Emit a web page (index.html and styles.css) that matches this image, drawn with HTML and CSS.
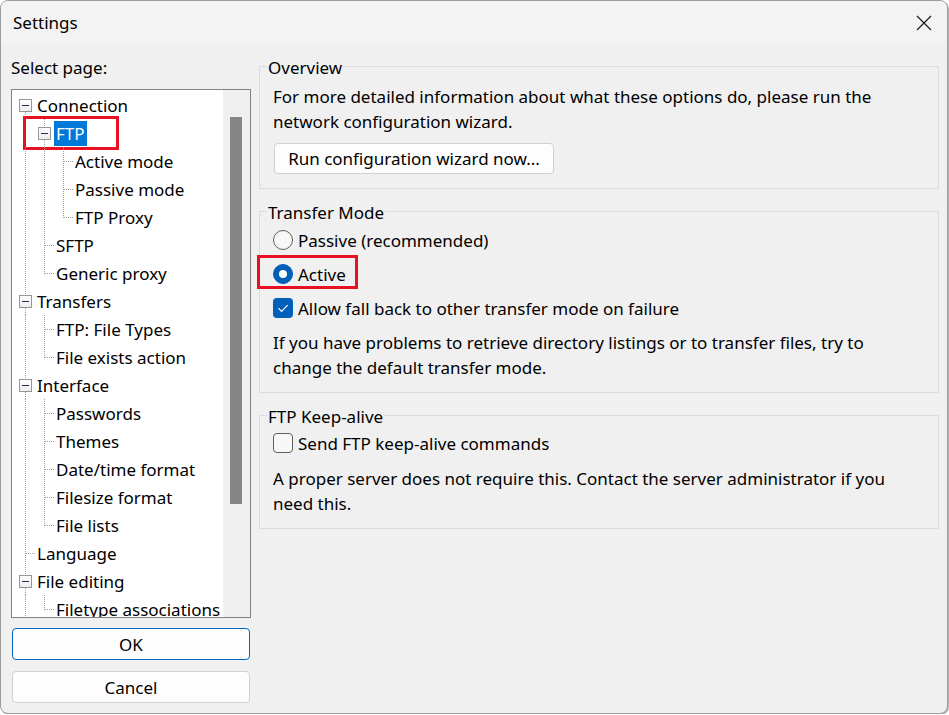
FILE: index.html
```html
<!DOCTYPE html>
<html lang="en">
<head>
<meta charset="utf-8">
<title>Settings</title>
<link rel="stylesheet" href="styles.css">
</head>
<body>
<div class="window">
  <div class="titlebar">
    <span class="title">Settings</span>
    <span class="close">
      <svg width="16" height="16" viewBox="0 0 16 16"><path d="M1 1 L15 15 M15 1 L1 15" stroke="#1a1a1a" stroke-width="1.2" fill="none"/></svg>
    </span>
  </div>
  <div class="main">
    <div class="left">
      <div class="label">Select page:</div>
      <div class="tree">
        <div class="rows">
          <div class="row"><span class="g b down"><i class="box"></i></span><span class="lbl">Connection</span></div>
          <div class="row"><span class="g v"></span><span class="g b up down"><i class="box"></i></span><span class="lbl sel">FTP</span><span class="mark mark-ftp"></span></div>
          <div class="row"><span class="g v"></span><span class="g v"></span><span class="g t"></span><span class="lbl">Active mode</span></div>
          <div class="row"><span class="g v"></span><span class="g v"></span><span class="g t"></span><span class="lbl">Passive mode</span></div>
          <div class="row"><span class="g v"></span><span class="g v"></span><span class="g l"></span><span class="lbl">FTP Proxy</span></div>
          <div class="row"><span class="g v"></span><span class="g t"></span><span class="lbl">SFTP</span></div>
          <div class="row"><span class="g v"></span><span class="g l"></span><span class="lbl">Generic proxy</span></div>
          <div class="row"><span class="g b up down"><i class="box"></i></span><span class="lbl">Transfers</span></div>
          <div class="row"><span class="g v"></span><span class="g t"></span><span class="lbl">FTP: File Types</span></div>
          <div class="row"><span class="g v"></span><span class="g l"></span><span class="lbl">File exists action</span></div>
          <div class="row"><span class="g b up down"><i class="box"></i></span><span class="lbl">Interface</span></div>
          <div class="row"><span class="g v"></span><span class="g t"></span><span class="lbl">Passwords</span></div>
          <div class="row"><span class="g v"></span><span class="g t"></span><span class="lbl">Themes</span></div>
          <div class="row"><span class="g v"></span><span class="g t"></span><span class="lbl">Date/time format</span></div>
          <div class="row"><span class="g v"></span><span class="g t"></span><span class="lbl">Filesize format</span></div>
          <div class="row"><span class="g v"></span><span class="g l"></span><span class="lbl">File lists</span></div>
          <div class="row"><span class="g t"></span><span class="lbl">Language</span></div>
          <div class="row"><span class="g b up down"><i class="box"></i></span><span class="lbl">File editing</span></div>
          <div class="row"><span class="g v"></span><span class="g l"></span><span class="lbl">Filetype associations</span></div>
        </div>
        <div class="scroll"><div class="thumb"></div></div>
      </div>
      <button class="btn ok">OK</button>
      <button class="btn cancel">Cancel</button>
    </div>
    <div class="right">
      <fieldset class="group overview">
        <legend>Overview</legend>
        <div class="inner">
          <p>For more detailed information about what these options do, please run the<br>network configuration wizard.</p>
          <button class="btn wizard">Run configuration wizard now...</button>
        </div>
      </fieldset>
      <fieldset class="group transfer">
        <legend>Transfer Mode</legend>
        <div class="inner">
          <div class="opt"><span class="radio"></span><span>Passive (recommended)</span></div>
          <div class="opt"><span class="radio on"></span><span>Active</span><span class="mark mark-active"></span></div>
          <div class="opt"><span class="check on"><svg width="20" height="20" viewBox="0 0 20 20"><path d="M5.5 10.2 L8.6 13.3 L14.6 7.2" stroke="#fff" stroke-width="1.2" fill="none"/></svg></span><span>Allow fall back to other transfer mode on failure</span></div>
          <p>If you have problems to retrieve directory listings or to transfer files, try to<br>change the default transfer mode.</p>
        </div>
      </fieldset>
      <fieldset class="group keep">
        <legend>FTP Keep-alive</legend>
        <div class="inner">
          <div class="opt"><span class="check"></span><span>Send FTP keep-alive commands</span></div>
          <p>A proper server does not require this. Contact the server administrator if you<br>need this.</p>
        </div>
      </fieldset>
    </div>
  </div>
</div>
</body>
</html>
```
FILE: styles.css
```css
html, body {
  margin: 0;
  padding: 0;
  background: #ffffff;
}

body {
  font-family: "Segoe UI", "Noto Sans", "Open Sans", sans-serif;
  font-size: 17px;
  color: #000;
}

.window {
  box-sizing: border-box;
  width: 948px;
  height: 714px;
  border: 1px solid #9c9c9c;
  border-radius: 8px;
  background: #f0f0f0;
  box-shadow: 1px 1px 0 #b4b4b4;
  overflow: hidden;
}

.titlebar {
  height: 43px;
  background: #f3f3f3;
  display: flex;
  align-items: center;
  justify-content: space-between;
}

.title {
  padding-left: 12px;
  font-size: 17px;
}

.close {
  width: 46px;
  height: 43px;
  display: flex;
  align-items: center;
  justify-content: center;
}

.main {
  display: flex;
  align-items: flex-start;
  gap: 8px;
  padding: 0 0 0 10px;
}

.left {
  width: 240px;
  padding-top: 14px;
  display: flex;
  flex-direction: column;
}

.label {
  line-height: 20px;
  height: 20px;
}

.tree {
  box-sizing: border-box;
  margin-top: 11px;
  width: 240px;
  height: 529px;
  border: 1px solid #828282;
  background: #fff;
  display: flex;
  overflow: hidden;
}

.rows {
  --dv: repeating-linear-gradient(to bottom, #a0a0a0 0 1px, transparent 1px 2px);
  --dh: repeating-linear-gradient(to right, #a0a0a0 0 1px, transparent 1px 2px);
  width: 211px;
  flex: none;
  padding: 1px 0 0 4px;
  box-sizing: border-box;
  overflow: hidden;
}

.row {
  position: relative;
  display: flex;
  align-items: center;
  height: 28px;
  white-space: nowrap;
}

.g {
  flex: none;
  width: 19px;
  height: 28px;
  display: flex;
  align-items: center;
}

.v {
  background: var(--dv) 9px 0 / 1px 28px no-repeat;
}

.t {
  background: var(--dv) 9px 0 / 1px 28px no-repeat,
              var(--dh) 10px 14px / 9px 1px no-repeat;
}

.l {
  background: var(--dv) 9px 0 / 1px 15px no-repeat,
              var(--dh) 10px 14px / 9px 1px no-repeat;
}

.b.down {
  background: var(--dv) 9px 21px / 1px 7px no-repeat;
}

.b.up {
  background: var(--dv) 9px 0 / 1px 8px no-repeat;
}

.b.up.down {
  background: var(--dv) 9px 0 / 1px 8px no-repeat,
              var(--dv) 9px 21px / 1px 7px no-repeat;
}

.box {
  box-sizing: border-box;
  width: 13px;
  height: 13px;
  margin-left: 3px;
  margin-top: 1px;
  border: 1px solid #969696;
  background: linear-gradient(#ffffff, #ececec);
  display: flex;
  align-items: center;
  justify-content: center;
}

.box::after {
  content: "";
  width: 7px;
  height: 1px;
  background: #1f2d5c;
}

.lbl {
  padding: 0 2px;
  line-height: 25px;
}

.lbl.sel {
  background: #0078d7;
  color: #fff;
}

.scroll {
  width: 27px;
  flex: none;
  background: #f0f0f0;
}

.thumb {
  margin: 27px 0 0 7px;
  width: 12px;
  height: 387px;
  background: #868686;
}

.mark {
  position: absolute;
  box-sizing: border-box;
  border: 3px solid #e81123;
  pointer-events: none;
}

.mark-ftp {
  left: 7px;
  top: -3px;
  width: 96px;
  height: 34px;
}

.mark-active {
  left: -16px;
  top: -2px;
  width: 101px;
  height: 34px;
}

.btn {
  box-sizing: border-box;
  font: inherit;
  color: #000;
  background: #fdfdfd;
  border: 1px solid #d0d0d0;
  border-radius: 4px;
  padding: 0;
}

.left .btn {
  width: 238px;
  height: 32px;
  margin-left: 1px;
}

.btn.ok {
  margin-top: 10px;
  border-color: #0067c0;
}

.btn.cancel {
  margin-top: 11px;
}

.right {
  width: 680px;
  padding-top: 10px;
}

.group {
  margin: 0;
  padding: 0 8px;
  border: 1px solid #dcdcdc;
  min-width: 0;
}

.group legend {
  padding: 4px 1px 0;
  margin-left: -1px;
  line-height: 20px;
}

.inner {
  padding-left: 5px;
}

.group p {
  margin: 0;
  line-height: 25px;
}

.overview .inner {
  padding-top: 6px;
  padding-bottom: 14px;
}

.wizard {
  display: block;
  margin: 9px 0 0 1px;
  width: 280px;
  height: 31px;
}

.transfer {
  margin-top: 10px;
}

.transfer .inner {
  padding-top: 0;
  padding-bottom: 12px;
}

.keep {
  margin-top: 10px;
}

.keep .inner {
  padding-top: 0;
  padding-bottom: 12px;
}

.keep .opt {
  margin-top: -1px;
}

.opt {
  position: relative;
  display: flex;
  align-items: center;
  gap: 5px;
  height: 34px;
  width: max-content;
}

.opt + p {
  margin-top: 5px;
}

.keep .opt + p {
  margin-top: 6px;
}

.radio {
  box-sizing: border-box;
  width: 20px;
  height: 20px;
  border-radius: 50%;
  border: 1px solid #5f5f5f;
  background: #f7f7f7;
  display: flex;
  align-items: center;
  justify-content: center;
}

.radio.on {
  border-color: #005fb8;
  background: #005fb8;
}

.radio.on::after {
  content: "";
  width: 8px;
  height: 8px;
  border-radius: 50%;
  background: #fff;
}

.check {
  box-sizing: border-box;
  width: 20px;
  height: 20px;
  border-radius: 4px;
  border: 1px solid #5f5f5f;
  background: #f7f7f7;
  display: flex;
}

.check.on {
  border: none;
  background: #005fb8;
}
```
